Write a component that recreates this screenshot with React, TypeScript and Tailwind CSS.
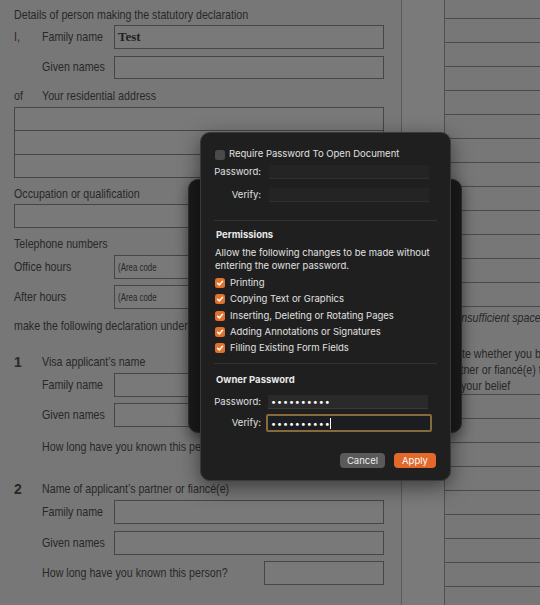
import React from "react";

const Box = ({ className = "", children }: { className?: string; children?: React.ReactNode }) => (
  <div className={"border border-[#464646] bg-[#797979] " + className}>{children}</div>
);

const N = ({ className = "", children }: { className?: string; children?: React.ReactNode }) => (
  <span className={"inline-block origin-left scale-x-[0.79] whitespace-nowrap " + className}>{children}</span>
);

function Check({ checked }: { checked: boolean }) {
  if (!checked) return <div className="w-[10px] h-[10px] rounded-[2.5px] bg-[#4a4a4a] shrink-0" />;
  return (
    <div className="w-[10px] h-[10px] rounded-[2.5px] bg-[#e0722e] shrink-0 flex items-center justify-center">
      <svg width="10" height="10" viewBox="0 0 10 10">
        <path d="M2.6 5.2 L4.3 6.9 L7.5 3.3" stroke="#fff" strokeWidth="1.5" fill="none" strokeLinecap="round" strokeLinejoin="round" />
      </svg>
    </div>
  );
}

function Label({ w, children }: { w: string; children?: React.ReactNode }) {
  return (
    <span className={w + " shrink-0"}>
      <N>{children}</N>
    </span>
  );
}

function LeftPage() {
  return (
    <div className="w-[402px] shrink-0 pl-[14px] pr-[17px] flex flex-col border-r border-[#5c5c5c]">
      <div className="flex items-center h-[20px] mt-[5px]"><N>Details of person making the statutory declaration</N></div>
      <div className="flex items-center h-[24px]">
        <Label w="w-[28px]">I,</Label>
        <Label w="w-[72px]">Family name</Label>
        <Box className="flex-1 h-full flex items-center pl-[3px]">
          <span className="font-['Liberation_Serif',serif] font-bold text-[13px] text-[#222]">Test</span>
        </Box>
      </div>
      <div className="flex items-center h-[23px] mt-[7px]">
        <Label w="w-[28px]"></Label>
        <Label w="w-[72px]">Given names</Label>
        <Box className="flex-1 h-full" />
      </div>
      <div className="flex items-center h-[20px] mt-[7px]">
        <Label w="w-[28px]">of</Label>
        <N>Your residential address</N>
      </div>
      <Box className="h-[71px] mt-[1px] flex flex-col">
        <div className="flex-1 border-b border-[#464646]" />
        <div className="flex-1 border-b border-[#464646]" />
        <div className="flex-1" />
      </Box>
      <div className="flex items-center h-[20px] mt-[6px]"><N>Occupation or qualification</N></div>
      <Box className="h-[24px]" />
      <div className="flex items-center h-[20px] mt-[6px]"><N>Telephone numbers</N></div>
      <div className="flex items-center h-[24px] mt-[1px]">
        <Label w="w-[100px]">Office hours</Label>
        <Box className="flex-1 h-full flex items-center pl-[3px] text-[10px]"><N>(Area code</N></Box>
      </div>
      <div className="flex items-center h-[24px] mt-[6px]">
        <Label w="w-[100px]">After hours</Label>
        <Box className="flex-1 h-full flex items-center pl-[3px] text-[10px]"><N>(Area code</N></Box>
      </div>
      <div className="flex items-center h-[20px] mt-[7px]"><N>make the following declaration under the Statutory Declarations Act 1959:</N></div>
      <div className="flex items-center h-[20px] mt-[16px]">
        <span className="w-[28px] shrink-0 font-bold text-[14px]">1</span>
        <N>Visa applicant’s name</N>
      </div>
      <div className="flex items-center h-[24px] mt-[1px]">
        <Label w="w-[28px]"></Label>
        <Label w="w-[72px]">Family name</Label>
        <Box className="flex-1 h-full" />
      </div>
      <div className="flex items-center h-[24px] mt-[6px]">
        <Label w="w-[28px]"></Label>
        <Label w="w-[72px]">Given names</Label>
        <Box className="flex-1 h-full" />
      </div>
      <div className="flex items-center h-[24px] mt-[8px]">
        <Label w="w-[28px]"></Label>
        <span className="flex-1 min-w-0"><N>How long have you known this person?</N></span>
        <Box className="w-[120px] shrink-0 h-full" />
      </div>
      <div className="flex items-center h-[20px] mt-[20px]">
        <span className="w-[28px] shrink-0 font-bold text-[14px]">2</span>
        <N>Name of applicant’s partner or fiancé(e)</N>
      </div>
      <div className="flex items-center h-[24px] mt-[1px]">
        <Label w="w-[28px]"></Label>
        <Label w="w-[72px]">Family name</Label>
        <Box className="flex-1 h-full" />
      </div>
      <div className="flex items-center h-[24px] mt-[7px]">
        <Label w="w-[28px]"></Label>
        <Label w="w-[72px]">Given names</Label>
        <Box className="flex-1 h-full" />
      </div>
      <div className="flex items-center h-[24px] mt-[6px]">
        <Label w="w-[28px]"></Label>
        <span className="flex-1 min-w-0"><N>How long have you known this person?</N></span>
        <Box className="w-[120px] shrink-0 h-full" />
      </div>
    </div>
  );
}

function RightPage() {
  const top = Array.from({ length: 12 });
  const bottom = Array.from({ length: 9 });
  return (
    <div className="flex-1 flex flex-col overflow-hidden">
      <div className="mt-[18px] border-t border-[#4a4a4a]">
        {top.map((_, i) => (
          <div key={i} className="h-[24px] border-b border-[#4a4a4a]" />
        ))}
      </div>
      <div className="h-[90px] pt-[3px]">
        <div className="h-[16px] leading-[16px] italic pl-[5px]"><N>If insufficient space, attach a statement</N></div>
        <div className="h-[16px] leading-[16px] mt-[20px] pl-[1px]"><N>State whether you believe the applicant and</N></div>
        <div className="h-[16px] leading-[16px] pl-[0px]"><N>partner or fiancé(e) to be in a genuine</N></div>
        <div className="h-[16px] leading-[16px] pl-[16px]"><N>your belief</N></div>
      </div>
      <div className="border-t border-[#4a4a4a]">
        {bottom.map((_, i) => (
          <div key={i} className="h-[24px] border-b border-[#4a4a4a]" />
        ))}
      </div>
    </div>
  );
}

function Field({ className = "", children }: { className?: string; children?: React.ReactNode }) {
  return <div className={"w-[160px] " + className}>{children}</div>;
}

function Dialog() {
  const perms = [
    "Printing",
    "Copying Text or Graphics",
    "Inserting, Deleting or Rotating Pages",
    "Adding Annotations or Signatures",
    "Filling Existing Form Fields",
  ];
  return (
    <>
      <div className="absolute left-[188px] top-[179px] w-[274px] h-[254px] rounded-[10px] bg-[#1a1a1a] border border-[#2e2e2e] shadow-[0_4px_14px_rgba(0,0,0,0.45)]" />
      <div className="absolute left-[200px] top-[132px] w-[251px] h-[349px] rounded-[10px] bg-[#1f1f1f] border border-[#3a3a3a] shadow-[0_6px_20px_rgba(0,0,0,0.5)] font-['Inter',sans-serif] text-[9.5px] text-[#e0e0e0] px-[13px] flex flex-col">
        <div className="flex items-center h-[15px] mt-[14px] gap-[4px] pl-[1px]">
          <Check checked={false} />
          <span>Require Password To Open Document</span>
        </div>
        <div className="flex items-center h-[14px] mt-[3px]">
          <span className="w-[47px] text-right">Password:</span>
          <Field className="ml-[8px] h-full bg-[#242424] border-b border-[#2f2f2f]" />
        </div>
        <div className="flex items-center h-[14px] mt-[9px]">
          <span className="w-[47px] text-right">Verify:</span>
          <Field className="ml-[8px] h-full bg-[#242424] border-b border-[#2f2f2f]" />
        </div>
        <div className="h-[1px] bg-[#333] mt-[18px]" />
        <div className="flex items-center h-[14px] mt-[7px] pl-[2px] font-bold text-[#e8e8e8]">Permissions</div>
        <div className="mt-[4px] h-[26px] leading-[13px] pl-[1px] whitespace-nowrap">
          Allow the following changes to be made without
          <br />
          entering the owner password.
        </div>
        <div className="mt-[3px] flex flex-col pl-[1px]">
          {perms.map((p) => (
            <div key={p} className="flex items-center h-[16.3px] gap-[5px]">
              <Check checked={true} />
              <span>{p}</span>
            </div>
          ))}
        </div>
        <div className="h-[1px] bg-[#333] mt-[7px]" />
        <div className="flex items-center h-[14px] mt-[9px] pl-[2px] font-bold text-[#e8e8e8]">Owner Password</div>
        <div className="flex items-center h-[14px] mt-[8px]">
          <span className="w-[47px] text-right">Password:</span>
          <Field className="ml-[7px] h-full bg-[#2a2a2a] border-b border-[#3a3a3a] flex items-center pl-[3px] text-[9px] tracking-[0.9px] text-white leading-none">
            ••••••••••
          </Field>
        </div>
        <div className="flex items-center h-[18px] mt-[5px]">
          <span className="w-[47px] text-right">Verify:</span>
          <div className="ml-[5px] w-[166px] h-full rounded-[2px] border-2 border-[#86693c] bg-[#1c1d21] flex items-center pl-[3px] text-[9px] tracking-[0.9px] text-white leading-none">
            <span>••••••••••</span>
            <span className="w-[1px] h-[11px] bg-white ml-[-0.5px]" />
          </div>
        </div>
        <div className="flex justify-end gap-[9px] mt-[21px] pr-[1px]">
          <div className="w-[45px] h-[15px] rounded-[4px] bg-[#5a5a5a] text-[#ececec] flex items-center justify-center">Cancel</div>
          <div className="w-[42px] h-[15px] rounded-[4px] bg-[#e2692b] text-white flex items-center justify-center">Apply</div>
        </div>
      </div>
    </>
  );
}

export default function App() {
  return (
    <div className="relative w-[540px] h-[605px] overflow-hidden bg-[#777777] text-[#282828] text-[13.5px] font-['Liberation_Sans',sans-serif]">
      <div className="flex h-full">
        <LeftPage />
        <div className="w-[43px] shrink-0 border-r border-[#505050] bg-[#7a7a7a]" />
        <RightPage />
      </div>
      <Dialog />
    </div>
  );
}
